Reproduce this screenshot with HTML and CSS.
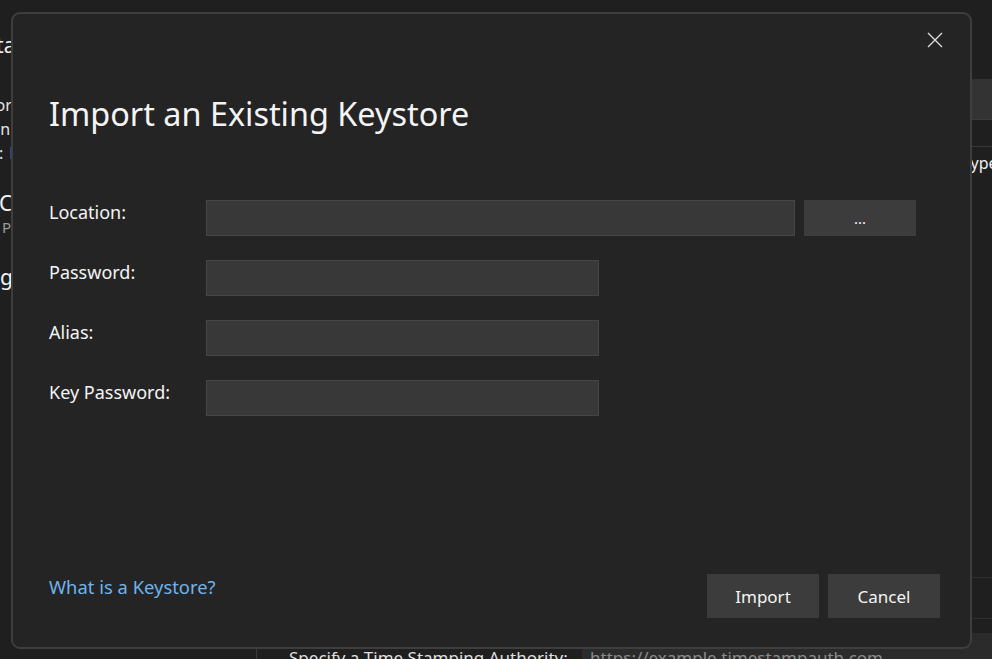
FILE: index.html
```html
<!DOCTYPE html>
<html lang="en">
<head>
<meta charset="utf-8">
<title>Import an Existing Keystore</title>
<link rel="stylesheet" href="styles.css">
</head>
<body>
<div class="app">
  <div class="bg-left">
    <div class="bl bl-title bl-1">Data</div>
    <div class="bl bl-body bl-2">for</div>
    <div class="bl bl-body bl-3">in</div>
    <div class="bl bl-body bl-4"><span>:</span><span class="bl-link">L</span></div>
    <div class="bl bl-title bl-5">Ce</div>
    <div class="bl bl-sub bl-6">Pr</div>
    <div class="bl bl-title bl-7">Sig</div>
  </div>
  <div class="bg-mid"></div>
  <div class="bg-right">
    <div class="br-bar"></div>
    <div class="br-row"><span class="br-text">Type</span></div>
    <div class="br-fill"></div>
    <div class="br-band"></div>
  </div>
  <div class="bg-bottom">
    <div class="bb-pane"></div>
    <div class="bb-label">Specify a Time Stamping Authority:</div>
    <div class="bb-input">https://example.timestampauth.com</div>
  </div>

  <div class="dialog" role="dialog" aria-label="Import an Existing Keystore">
    <div class="dlg-top">
      <button class="close" aria-label="Close">
        <svg width="16" height="16" viewBox="0 0 16 16"><path d="M1 1 L15 15 M15 1 L1 15" stroke="#dcdcdc" stroke-width="1.4" fill="none"/></svg>
      </button>
    </div>
    <h1 class="title">Import an Existing Keystore</h1>
    <div class="form">
      <label class="lbl">Location:</label>
      <div class="loc-row">
        <div class="field loc"></div>
        <button class="btn browse">...</button>
      </div>
      <label class="lbl">Password:</label>
      <div class="field short"></div>
      <label class="lbl">Alias:</label>
      <div class="field short"></div>
      <label class="lbl">Key Password:</label>
      <div class="field short"></div>
    </div>
    <div class="footer">
      <a class="link" href="#">What is a Keystore?</a>
      <div class="actions">
        <button class="btn action">Import</button>
        <button class="btn action">Cancel</button>
      </div>
    </div>
  </div>
</div>
</body>
</html>
```

FILE: styles.css
```css
html, body {
  margin: 0;
  padding: 0;
}
body {
  background: #1f1f1f;
  font-family: "Noto Sans", "Open Sans", sans-serif;
  color: #f2f2f2;
  width: 992px;
  height: 659px;
  overflow: hidden;
}
.app {
  position: relative;
  width: 992px;
  height: 659px;
  overflow: hidden;
  display: grid;
  grid-template-columns: 12px 1fr 21px;
  grid-template-rows: 1fr 26px;
}

/* background: left sliver */
.bg-left {
  display: flex;
  flex-direction: column;
  align-items: flex-start;
  overflow: hidden;
}
.bl {
  white-space: nowrap;
  line-height: 24px;
  color: #e6e6e6;
}
.bl-title { font-size: 21px; color: #f2f2f2; }
.bl-body { font-size: 16px; }
.bl-sub { font-size: 15px; color: #9a9a9a; }
.bl-link { color: #6fb3ec; margin-left: 6px; }
.bl-1 { margin-top: 33px; margin-left: -31px; }
.bl-2 { margin-top: 36px; margin-left: -10px; }
.bl-3 { margin-left: -4px; }
.bl-4 { margin-left: -1px; }
.bl-5 { margin-top: 26px; margin-left: -1px; }
.bl-6 { margin-left: 2px; }
.bl-7 { margin-top: 26px; margin-left: -17px; }

/* background: right sliver */
.bg-right {
  display: flex;
  flex-direction: column;
  overflow: hidden;
}
.br-bar {
  margin-top: 79px;
  height: 40px;
  background: #333333;
  border-bottom: 1px solid #3d3d3d;
}
.br-row {
  margin-top: 26px;
  border-top: 1px solid #383838;
  padding-top: 4px;
  height: 30px;
  white-space: nowrap;
}
.br-text {
  display: inline-block;
  margin-left: -9px;
  font-size: 16px;
  line-height: 24px;
  color: #f0f0f0;
}
.br-fill { flex: 1; }
.br-band {
  height: 40px;
  border-top: 1px solid #2f2f2f;
  border-bottom: 1px solid #2f2f2f;
  margin-bottom: 14px;
}

/* background: bottom strip */
.bg-bottom {
  grid-column: 1 / -1;
  display: flex;
  white-space: nowrap;
  overflow: hidden;
}
.bb-pane {
  width: 256px;
  flex: none;
  border-right: 1px solid #3a3a3a;
}
.bb-label {
  padding-left: 32px;
  padding-top: 13px;
  width: 293px;
  flex: none;
  font-size: 17px;
  line-height: 24px;
  color: #dedede;
}
.bb-input {
  flex: 1;
  background: #2b2b2b;
  padding-left: 8px;
  padding-top: 13px;
  font-size: 17px;
  line-height: 24px;
  color: #8a8a8a;
}

/* dialog */
.dialog {
  position: absolute;
  left: 11px;
  top: 12px;
  width: 961px;
  height: 637px;
  box-sizing: border-box;
  border: 2px solid #3e3e3e;
  border-radius: 9px;
  background: #242424;
  display: flex;
  flex-direction: column;
  z-index: 2;
}
.dlg-top {
  display: flex;
  justify-content: flex-end;
  padding: 10px 19px 0 0;
}
.close {
  width: 32px;
  height: 32px;
  border: 0;
  padding: 0;
  background: transparent;
  display: flex;
  align-items: center;
  justify-content: center;
}
.close svg { display: block; }
.title {
  margin: 35px 0 0 0;
  padding-left: 36px;
  font-size: 32.4px;
  font-weight: 400;
  line-height: 44px;
  color: #f4f4f4;
}
.form {
  margin-top: 65px;
  padding-left: 36px;
  display: grid;
  grid-template-columns: 157px auto;
  row-gap: 24px;
  justify-items: start;
  align-items: start;
}
.lbl {
  font-size: 18px;
  line-height: 24px;
  color: #f4f4f4;
}
.loc-row {
  display: flex;
  gap: 9px;
  width: 710px;
}
.field {
  box-sizing: border-box;
  height: 36px;
  background: #383838;
  border: 1px solid #464646;
}
.field.loc { flex: 1; }
.field.short { width: 393px; }
.btn {
  border: 0;
  background: #3c3c3c;
  color: #f4f4f4;
  font-family: "Noto Sans", "Open Sans", sans-serif;
  padding: 0;
}
.browse {
  width: 112px;
  height: 36px;
  font-size: 15px;
  line-height: 36px;
}
.footer {
  margin-top: auto;
  display: flex;
  justify-content: space-between;
  align-items: flex-start;
  padding: 0 30px 29px 36px;
}
.link {
  margin-top: 1px;
  font-size: 18.4px;
  line-height: 24px;
  color: #6fb3ec;
  text-decoration: none;
}
.actions {
  display: flex;
  gap: 9px;
}
.action {
  width: 112px;
  height: 44px;
  font-size: 17px;
}
```
